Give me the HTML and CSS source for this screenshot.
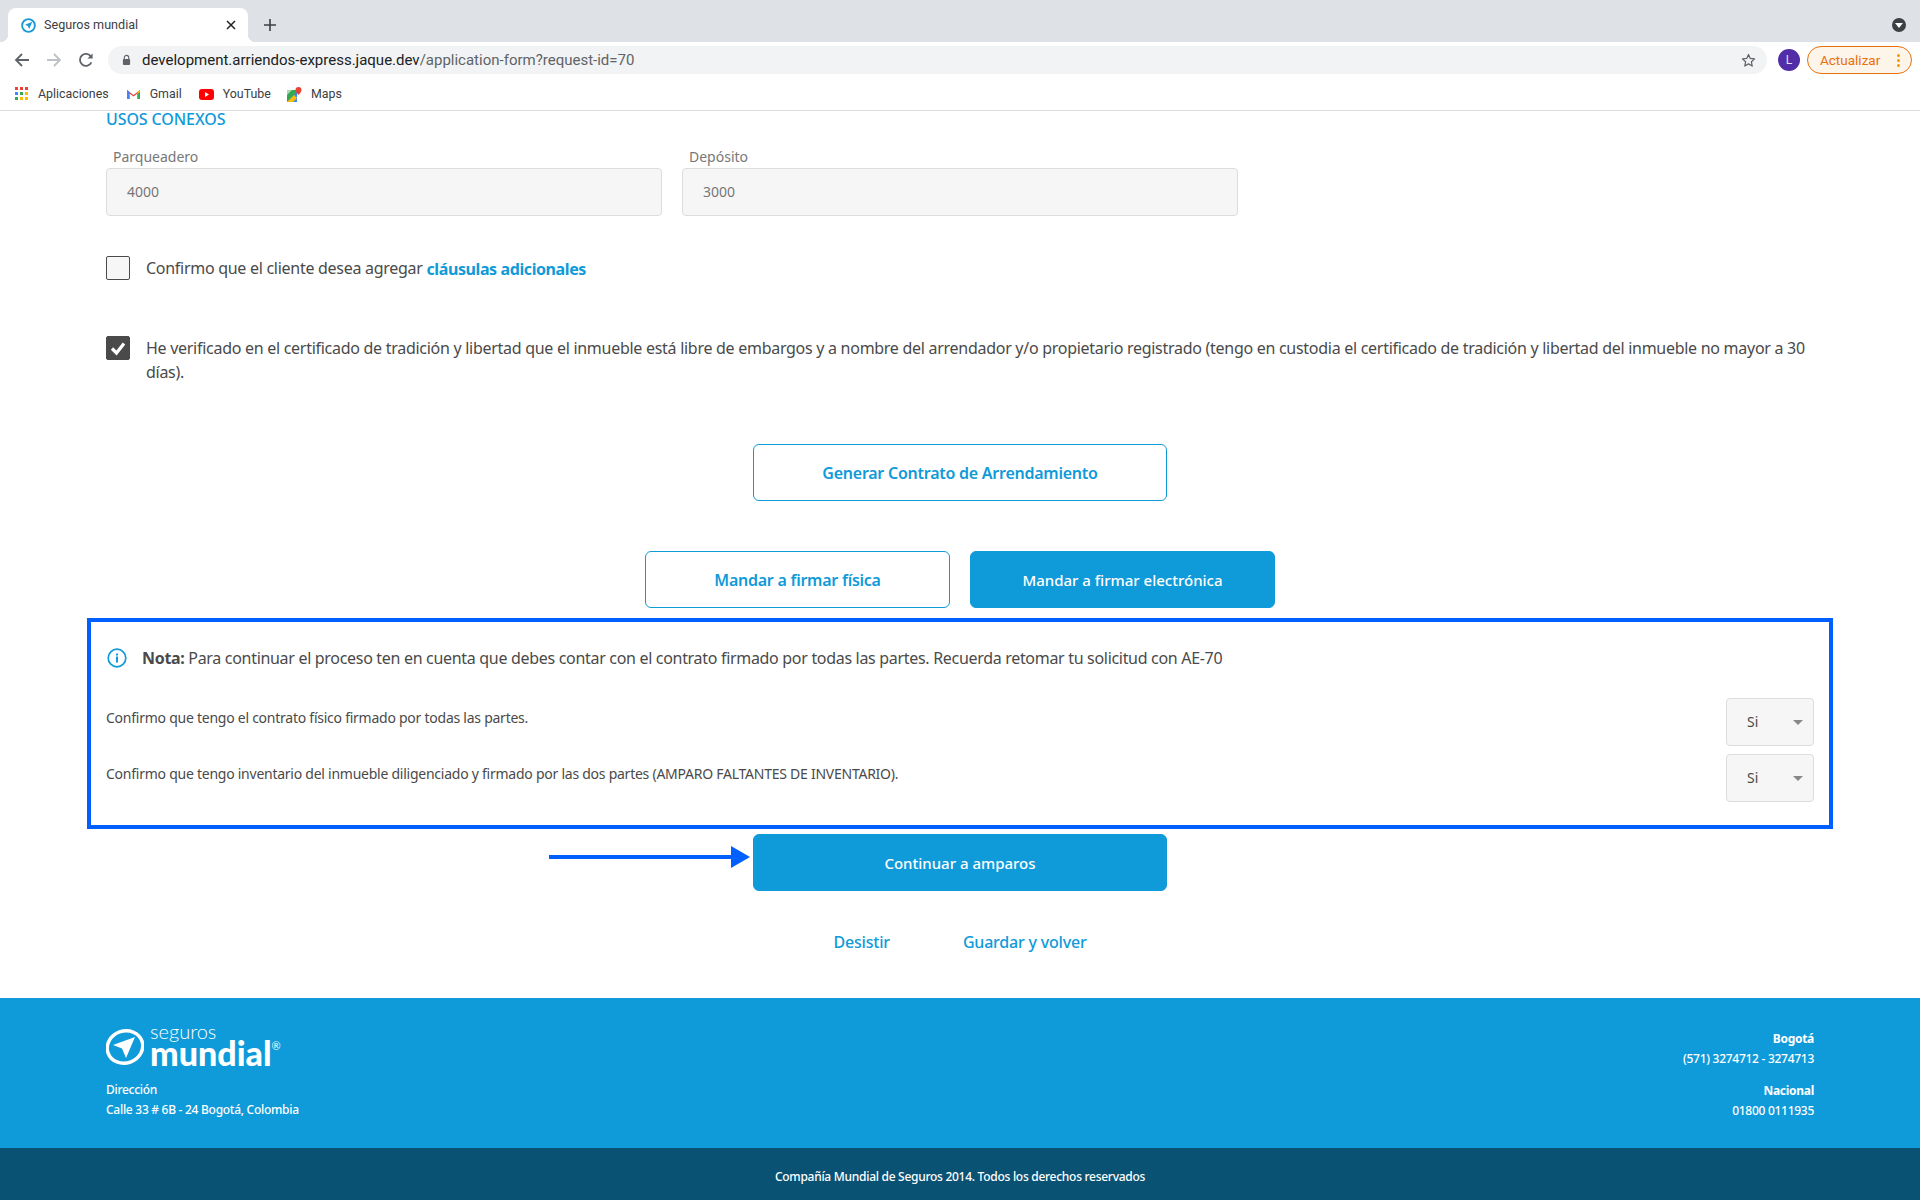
FILE: index.html
```html
<!DOCTYPE html>
<html lang="es">
<head>
    <meta charset="UTF-8">
    <title>Seguros mundial</title>
    <link rel="stylesheet" href="styles.css">
</head>
<body>
    <div class="browser">
        <div class="tabstrip">
            <div class="tab">
                <svg class="favicon" viewBox="0 0 16 16" width="15" height="15"><circle cx="8" cy="8" r="6.8" fill="none" stroke="#1a9ad9" stroke-width="2"/><path d="M12 4 4.300 7.200l3 1.300L8.800 11.700z" fill="#1a9ad9"/></svg>
                <span class="tab-title">Seguros mundial</span>
                <svg class="tab-close" viewBox="0 0 10 10" width="10" height="10"><path d="M1 1l8 8M9 1l-8 8" stroke="#202124" stroke-width="1.5"/></svg>
            </div>
            <svg class="new-tab" viewBox="0 0 12 12" width="12" height="12"><path d="M6 0v12M0 6h12" stroke="#3c4043" stroke-width="1.6"/></svg>
            <span class="tab-menu"></span>
        </div>
        <div class="toolbar">
            <svg viewBox="0 0 16 16" width="16" height="16"><path d="M15 8H2M8 2 2 8l6 6" fill="none" stroke="#5f6368" stroke-width="1.8"/></svg>
            <svg viewBox="0 0 16 16" width="16" height="16"><path d="M1 8h13M8 2l6 6-6 6" fill="none" stroke="#bdc1c6" stroke-width="1.8"/></svg>
            <svg viewBox="0 0 16 16" width="16" height="16"><path d="M13.4 10.4A6 6 0 1 1 13 4.6" fill="none" stroke="#5f6368" stroke-width="1.8"/><path d="M14.6 1.4v5.2H9.4z" fill="#5f6368"/></svg>
            <div class="omnibox">
                <svg viewBox="0 0 10 12" width="9" height="12"><path d="M2.5 5V3.4a2.5 2.5 0 0 1 5 0V5" fill="none" stroke="#5f6368" stroke-width="1.2"/><rect x="1" y="5" width="8" height="6.5" rx="1" fill="#5f6368"/></svg>
                <span class="url"><span class="url-host">development.arriendos-express.jaque.dev</span>/application-form?request-id=70</span>
                <svg class="star" viewBox="0 0 16 16" width="15" height="15"><path d="m8 1.6 1.9 4.2 4.6.5-3.4 3.1.9 4.5L8 11.6l-4 2.3.9-4.5-3.4-3.1 4.6-.5z" fill="none" stroke="#5f6368" stroke-width="1.3" stroke-linejoin="round"/></svg>
            </div>
            <span class="avatar">L</span>
            <div class="update-pill">
                <span>Actualizar</span>
                <span class="update-dots"><i></i><i></i><i></i></span>
            </div>
        </div>
        <div class="bookmarks">
            <div class="bookmark apps">
                <svg viewBox="0 0 14 14" width="14" height="14">
                    <rect x="0" y="0" width="3" height="3" fill="#ea4335"/><rect x="5" y="0" width="3" height="3" fill="#ea4335"/><rect x="10" y="0" width="3" height="3" fill="#ea4335"/>
                    <rect x="0" y="5" width="3" height="3" fill="#4285f4"/><rect x="5" y="5" width="3" height="3" fill="#34a853"/><rect x="10" y="5" width="3" height="3" fill="#fbbc05"/>
                    <rect x="0" y="10" width="3" height="3" fill="#34a853"/><rect x="5" y="10" width="3" height="3" fill="#fbbc05"/><rect x="10" y="10" width="3" height="3" fill="#fbbc05"/>
                </svg>
                <span>Aplicaciones</span>
            </div>
            <div class="bookmark gmail">
                <svg viewBox="0 0 15 12" width="15" height="12"><path d="M1 11V2l6.500 5L14 2v9h-2.500V5.500l-4 3-4-3V11z" fill="#ea4335"/><path d="M1 11V2l2.500 2v7z" fill="#4285f4"/><path d="M14 11V2l-2.500 2v7z" fill="#34a853"/><path d="M11.500 4 14 2v2l-2.500 2z" fill="#fbbc05"/></svg>
                <span>Gmail</span>
            </div>
            <div class="bookmark youtube">
                <svg viewBox="0 0 15 11" width="15" height="11"><rect width="15" height="11" rx="3" fill="#f00"/><path d="M6 3v5l4-2.500z" fill="#fff"/></svg>
                <span>YouTube</span>
            </div>
            <div class="bookmark maps">
                <svg viewBox="0 0 15 15" width="15" height="15"><path d="M0 3h10v12H0z" fill="#34a853"/><path d="M0 15 10 5v10z" fill="#4285f4"/><path d="M0 15 7 8l3 3-4 4z" fill="#fbbc05"/><path d="M0 3h5L0 8z" fill="#a8dab5"/><path d="M11.500 0a3 3 0 0 1 3 3c0 2-3 5-3 5s-3-3-3-5a3 3 0 0 1 3-3z" fill="#ea4335"/></svg>
                <span>Maps</span>
            </div>
        </div>
    </div>

    <div class="form">
        <h3 class="section-title">USOS CONEXOS</h3>
        <div class="fields">
            <div class="field">
                <label>Parqueadero</label>
                <div class="input">4000</div>
            </div>
            <div class="field">
                <label>Depósito</label>
                <div class="input">3000</div>
            </div>
        </div>

        <div class="check-row first">
            <span class="checkbox"></span>
            <p>Confirmo que el cliente desea agregar <a class="clauses">cláusulas adicionales</a></p>
        </div>
        <div class="check-row second">
            <span class="checkbox checked">
                <svg viewBox="0 0 24 24" width="24" height="24"><path d="m6 12.500 4.500 4.500 7.500-9.500" fill="none" stroke="#fff" stroke-width="3.200"/></svg>
            </span>
            <p>He verificado en el certificado de tradición y libertad que el inmueble está libre de embargos y a nombre del arrendador y/o propietario registrado (tengo en custodia el certificado de tradición y libertad del inmueble no mayor a 30 días).</p>
        </div>

        <div class="actions generate">
            <button class="btn outline wide">Generar Contrato de Arrendamiento</button>
        </div>
        <div class="actions sign">
            <button class="btn outline">Mandar a firmar física</button>
            <button class="btn solid">Mandar a firmar electrónica</button>
        </div>

        <div class="note-box">
            <div class="note">
                <svg viewBox="0 0 20 20" width="20" height="20"><circle cx="10" cy="10" r="8.800" fill="none" stroke="#0f9ad9" stroke-width="1.700"/><rect x="9" y="8.500" width="2" height="6" fill="#0f9ad9"/><rect x="9" y="5.500" width="2" height="2" fill="#0f9ad9"/></svg>
                <p><b>Nota:</b> Para continuar el proceso ten en cuenta que debes contar con el contrato firmado por todas las partes. Recuerda retomar tu solicitud con AE-70</p>
            </div>
            <div class="confirm-row">
                <p>Confirmo que tengo el contrato físico firmado por todas las partes.</p>
                <div class="select">Si</div>
            </div>
            <div class="confirm-row">
                <p>Confirmo que tengo inventario del inmueble diligenciado y firmado por las dos partes (AMPARO FALTANTES DE INVENTARIO).</p>
                <div class="select">Si</div>
            </div>
        </div>

        <div class="actions continue">
            <div class="continue-wrap">
                <svg class="pointer" viewBox="0 0 201 22" width="201" height="22"><path d="M0 9h183v4H0z" fill="#0060ff"/><path d="M182 0l19 11-19 11z" fill="#0060ff"/></svg>
                <button class="btn solid wide">Continuar a amparos</button>
            </div>
        </div>

        <div class="links">
            <a>Desistir</a>
            <a>Guardar y volver</a>
        </div>
    </div>

    <footer>
        <div class="footer-main">
            <div class="footer-left">
                <div class="logo">
                    <svg viewBox="0 0 38 38" width="38" height="38"><ellipse cx="19" cy="19" rx="18" ry="16" transform="rotate(-20 19 19)" fill="none" stroke="#fff" stroke-width="3.500"/><path d="M29 9 7 17l9 3.500L20 30z" fill="#fff"/></svg>
                    <div class="logo-text">
                        <span class="logo-top">seguros</span>
                        <span class="logo-bottom">mundial<sup>®</sup></span>
                    </div>
                </div>
                <p>Dirección</p>
                <p>Calle 33 # 6B - 24 Bogotá, Colombia</p>
            </div>
            <div class="footer-right">
                <p><b>Bogotá</b></p>
                <p>(571) 3274712 - 3274713</p>
                <p class="national"><b>Nacional</b></p>
                <p>01800 0111935</p>
            </div>
        </div>
        <div class="footer-bottom">Compañía Mundial de Seguros 2014. Todos los derechos reservados</div>
    </footer>
</body>
</html>
```

FILE: styles.css
```css
* {
    padding: 0;
    margin: 0;
    box-sizing: border-box;
}

html, body {
    height: 1200px;
    overflow: hidden;
}

body {
    font-family: "Noto Sans", sans-serif;
    color: #4a4a4a;
    background: #fff;
}

/* Browser chrome */
.browser {
    font-family: Roboto, "Liberation Sans", sans-serif;
    height: 111px;
    border-bottom: 1px solid #dadce0;
}

.tabstrip {
    height: 42px;
    background: #dee1e6;
    padding: 8px 14px 0 8px;
    display: flex;
    align-items: center;
}

.tab {
    width: 240px;
    height: 34px;
    background: #fff;
    border-radius: 8px 8px 0 0;
    display: flex;
    align-items: center;
    padding: 0 12px 0 13px;
    position: relative;
}

.tab::before,
.tab::after {
    content: '';
    position: absolute;
    bottom: 0;
    width: 8px;
    height: 8px;
}

.tab::before {
    left: -8px;
    background: radial-gradient(circle at 0 0, transparent 8px, #fff 8.5px);
}

.tab::after {
    right: -8px;
    background: radial-gradient(circle at 100% 0, transparent 8px, #fff 8.5px);
}

.tab-title {
    font-size: 12.6px;
    line-height: 14px;
    color: #3c4043;
    margin-left: 8px;
    margin-bottom: 1px;
    flex: 1;
}

.new-tab {
    margin-left: 16px;
}

.tab-menu {
    margin-left: auto;
    width: 14px;
    height: 14px;
    border-radius: 50%;
    background: #3c4043;
    position: relative;
}

.tab-menu::after {
    content: '';
    position: absolute;
    left: 3px;
    top: 5px;
    border: 4px solid transparent;
    border-top: 5px solid #fff;
    border-bottom: 0;
}

.toolbar {
    height: 36px;
    padding: 4px 8px 4px 14px;
    display: flex;
    align-items: center;
    gap: 16px;
}

.omnibox {
    flex: 1;
    height: 28px;
    border-radius: 14px;
    background: #f1f3f4;
    margin-left: -2px;
    display: flex;
    align-items: center;
    padding: 0 11px 0 14px;
}

.url {
    font-size: 15px;
    color: #5f6368;
    margin-left: 11px;
    flex: 1;
}

.url-host {
    color: #202124;
}

.avatar {
    width: 22px;
    height: 22px;
    border-radius: 50%;
    background: #512da8;
    color: #e8e0f5;
    font-size: 12px;
    text-align: center;
    line-height: 22px;
    margin-left: -5px;
}

.update-pill {
    width: 105px;
    height: 28px;
    border: 1px solid #e8710a;
    border-radius: 14px;
    background: #fdf4ea;
    color: #e8710a;
    font-size: 13.5px;
    display: flex;
    align-items: center;
    padding: 0 11px 0 12px;
    justify-content: space-between;
    margin-left: -9px;
}

.update-dots {
    display: flex;
    flex-direction: column;
    gap: 2px;
}

.update-dots i {
    width: 3px;
    height: 3px;
    border-radius: 50%;
    background: #f29900;
}

.bookmarks {
    height: 32px;
    display: flex;
    align-items: center;
    padding-left: 15px;
    font-size: 12.4px;
    color: #3c4043;
}

.bookmark {
    display: flex;
    align-items: center;
    gap: 9px;
}

.bookmark span {
    line-height: 14px;
    margin-bottom: 1px;
}

.gmail { margin-left: 17px; }
.youtube { margin-left: 17px; }
.maps { margin-left: 16px; }

/* Form */
.form {
    padding: 0 106px;
    height: 887px;
}

.section-title {
    font-size: 16px;
    line-height: 17px;
    font-weight: 500;
    letter-spacing: -.1px;
    color: #0f9ad9;
}

.fields {
    display: grid;
    grid-template-columns: 556px 556px;
    gap: 20px;
    margin-top: 19px;
}

.field label {
    display: block;
    font-size: 14px;
    line-height: 20px;
    padding-left: 7px;
    margin-bottom: 1px;
    color: #777;
}

.input {
    height: 48px;
    background: #f6f6f6;
    border: 1px solid #ddd;
    border-radius: 4px;
    font-size: 14px;
    line-height: 46px;
    padding-left: 20px;
    color: #777;
}

.check-row {
    display: flex;
    gap: 16px;
    font-size: 16px;
    line-height: 24px;
    letter-spacing: -.28px;
}

.check-row.first {
    margin-top: 40px;
    height: 24px;
}

.check-row.second { margin-top: 56px; }

.checkbox {
    flex: none;
    width: 24px;
    height: 24px;
    border: 1px solid #4a4a4a;
    border-radius: 2px;
    background: #f6f6f6;
}

.checkbox.checked {
    background: #4a4a4a;
}

.checkbox.checked svg {
    display: block;
    margin: -1px;
}

.clauses {
    color: #0f9ad9;
    font-weight: 700;
    letter-spacing: -.4px;
    vertical-align: -1px;
}

.actions {
    display: flex;
    justify-content: center;
    gap: 20px;
}

.generate { margin-top: 60px; }
.sign { margin-top: 50px; }
.continue { margin-top: 5px; }

.btn {
    width: 305px;
    height: 57px;
    border-radius: 6px;
    font-family: inherit;
    font-size: 16px;
    font-weight: 600;
    letter-spacing: -.25px;
    border: 1px solid #0f9ad9;
}

.btn.wide {
    width: 414px;
}

.btn.outline {
    background: #fff;
    color: #0f9ad9;
}

.btn.solid {
    background: #0f9ad9;
    color: #fff;
    font-size: 15px;
    font-weight: 500;
    letter-spacing: 0;
}

/* Annotated box */
.note-box {
    margin: 10px -19px 0;
    height: 211px;
    border: 4px solid #0060ff;
    padding: 24px 15px 0;
}

.note {
    display: flex;
    align-items: center;
    gap: 15px;
    font-size: 16px;
    line-height: 24px;
    letter-spacing: -.31px;
    padding-left: 1px;
}

.confirm-row {
    display: flex;
    justify-content: space-between;
    align-items: flex-start;
    font-size: 14px;
    line-height: 24px;
    margin-top: 8px;
}

.note + .confirm-row {
    margin-top: 28px;
}

.confirm-row p {
    padding-top: 8px;
    letter-spacing: -.25px;
}

.select {
    width: 88px;
    height: 48px;
    background: #f6f6f6;
    border: 1px solid #ddd;
    border-radius: 4px;
    font-size: 14px;
    line-height: 46px;
    padding-left: 20px;
    position: relative;
}

.select::after {
    content: '';
    position: absolute;
    right: 10px;
    top: 21px;
    border: 5px solid transparent;
    border-top: 5px solid #888;
    border-bottom: 0;
}

.continue-wrap {
    position: relative;
}

.pointer {
    position: absolute;
    right: 100%;
    top: 12px;
    margin-right: 3px;
}

.links {
    display: flex;
    justify-content: center;
    gap: 73px;
    margin-top: 39px;
    font-size: 16px;
    line-height: 24px;
    font-weight: 500;
    letter-spacing: -.2px;
    color: #0f9ad9;
}

/* Footer */
footer {
    height: 202px;
    color: #fff;
    font-size: 12px;
    font-weight: 500;
    line-height: 20px;
    letter-spacing: -.28px;
}

.footer-main {
    height: 150px;
    background: #0f9ad9;
    padding: 31px 106px 0;
    display: flex;
    justify-content: space-between;
}

.logo {
    height: 51px;
    display: flex;
    gap: 6px;
    font-family: Lato, sans-serif;
    letter-spacing: 0;
    margin-top: -1px;
    margin-bottom: 1px;
}

.logo-text {
    display: flex;
    flex-direction: column;
    margin-top: -4px;
}

.logo-top {
    font-size: 20px;
    font-weight: 300;
    line-height: 15px;
}

.logo-bottom {
    font-size: 34px;
    font-weight: 900;
    line-height: 27px;
}

.logo-bottom sup {
    font-size: 11px;
    font-weight: 400;
    line-height: 0;
    vertical-align: 16px;
}

.footer-right {
    text-align: right;
}

.footer-right .national {
    margin-top: 12px;
}

.footer-bottom {
    height: 52px;
    background: #0a5274;
    text-align: center;
    line-height: 58px;
}
```
